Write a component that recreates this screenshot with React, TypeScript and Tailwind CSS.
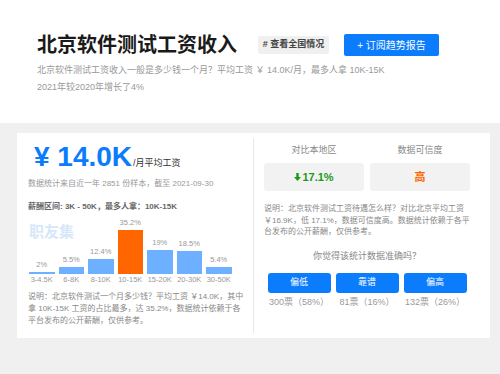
import React from 'react';

const bars = [
  { range: '3-4.5K', pct: 2, label: '2%' },
  { range: '6-8K', pct: 5.5, label: '5.5%' },
  { range: '8-10K', pct: 12.4, label: '12.4%' },
  { range: '10-15K', pct: 35.2, label: '35.2%', top: true },
  { range: '15-20K', pct: 19, label: '19%' },
  { range: '20-30K', pct: 18.5, label: '18.5%' },
  { range: '30-50K', pct: 5.4, label: '5.4%' },
];

const votes = [
  { name: '偏低', count: '300票（58%）' },
  { name: '靠谱', count: '81票（16%）' },
  { name: '偏高', count: '132票（26%）' },
];

function DownArrow() {
  return (
    <svg width="7" height="8" viewBox="0 0 7 8" className="mr-[1px]">
      <path d="M2.3 0h2.4v4h2.3L3.5 8 0 4h2.3z" fill="#1a9a1a" />
    </svg>
  );
}

function App() {
  return (
    <div className="w-[500px] h-[374px] bg-[#f0f0f0] font-['Liberation_Sans','Noto_Sans_CJK_SC',sans-serif]">
      {/* Header */}
      <div className="bg-white h-[123px] pl-[37px] pt-[34px]">
        <div className="flex items-center h-[22px]">
          <h1 className="text-[20px] leading-[22px] font-bold text-[#1a1a1a]">北京软件测试工资收入</h1>
          <span className="ml-[21px] w-[71px] h-[18px] flex items-center justify-center bg-[#f0f0f0] rounded-[2px] text-[9px] font-bold text-[#444]">
            # 查看全国情况
          </span>
          <button className="ml-[15px] w-[95px] h-[22px] bg-[#0b7cfc] rounded-[2px] text-white text-[10px]">
            + 订阅趋势报告
          </button>
        </div>
        <p className="mt-[6px] text-[9px] leading-[17px] text-[#999]">
          北京软件测试工资收入一般是多少钱一个月？平均工资 ￥ 14.0K/月，最多人拿 10K-15K
          <br />
          2021年较2020年增长了4%
        </p>
      </div>

      {/* Card */}
      <div className="pt-[10px] pl-[17px]">
        <div className="w-[473px] h-[205px] bg-white flex">
          {/* Left */}
          <div className="w-[236px] pl-[11px] pt-[10px] relative">
            <div className="flex items-baseline">
              <span className="ml-[6px] text-[28px] leading-[28px] font-bold text-[#0b7cfc]">¥ 14.0K</span>
              <span className="ml-[1px] text-[9px] text-[#333]">/月平均工资</span>
            </div>
            <p className="mt-[7px] text-[8px] leading-[12px] text-[#999]">
              数据统计来自近一年 2851 份样本，截至 2021-09-30
            </p>
            <p className="mt-[11px] text-[8px] leading-[12px] font-bold text-[#666]">
              薪酬区间: 3K - 50K，最多人拿：10K-15K
            </p>

            <div className="relative mt-[5px]">
              <span className="absolute left-[1px] top-[5px] text-[15px] leading-[18px] font-bold text-[#d6e7fa]">职友集</span>
              <div className="flex items-end gap-[4px] h-[56px] pl-[1px]">
                {bars.map((b) => (
                  <div key={b.range} className="w-[25.5px] flex flex-col items-center">
                    <span className="text-[7.5px] leading-[10px] text-[#999] mb-[2px]">{b.label}</span>
                    <div
                      className={b.top ? 'w-full bg-[#ff6600]' : 'w-full bg-[#6cb0ff]'}
                      style={{ height: `${b.pct * 1.25}px` }}
                    />
                  </div>
                ))}
              </div>
              <div className="flex gap-[4px] mt-[1px] pl-[1px]">
                {bars.map((b) => (
                  <span key={b.range} className="w-[25.5px] text-center text-[7.5px] leading-[10px] text-[#999] whitespace-nowrap">
                    {b.range}
                  </span>
                ))}
              </div>
            </div>

            <p className="mt-[6px] text-[8px] leading-[12px] text-[#888] whitespace-nowrap">
              说明：北京软件测试一个月多少钱？平均工资 ￥14.0K，其中
              <br />
              拿 10K-15K 工资的占比最多，达 35.2%，数据统计依赖于各
              <br />
              平台发布的公开薪酬，仅供参考。
            </p>
          </div>

          {/* Right */}
          <div className="flex-1 my-[5px] border-l border-[#e8e8e8] pl-[10px] pr-[20px] pt-[6px]">
            <div className="grid grid-cols-2 gap-x-[6px]">
              <span className="text-center text-[9px] leading-[12px] text-[#888]">对比本地区</span>
              <span className="text-center text-[9px] leading-[12px] text-[#888]">数据可信度</span>
              <div className="mt-[7px] h-[28px] bg-[#f2f2f2] rounded-[3px] flex items-center justify-center text-[11px] font-bold text-[#1a9a1a]">
                <DownArrow />
                17.1%
              </div>
              <div className="mt-[7px] h-[28px] bg-[#f2f2f2] rounded-[3px] flex items-center justify-center text-[11px] font-bold text-[#ff6600]">
                高
              </div>
            </div>
            <p className="mt-[12px] text-[8px] leading-[11.5px] text-[#888] whitespace-nowrap">
              说明：北京软件测试工资待遇怎么样？对比北京平均工资
              <br />
              ￥16.9K，低 17.1%，数据可信度高。数据统计依赖于各平
              <br />
              台发布的公开薪酬，仅供参考。
            </p>
            <p className="mt-[12px] text-center text-[9px] leading-[12px] text-[#888]">你觉得该统计数据准确吗？</p>
            <div className="mt-[11px] flex justify-center gap-[5px]">
              {votes.map((v) => (
                <div key={v.name} className="w-[63px] flex flex-col items-center">
                  <button className="w-full h-[20px] bg-[#0b7cfc] rounded-[3px] text-white text-[9px]">{v.name}</button>
                  <span className="mt-[4px] text-[9px] leading-[10px] text-[#999] whitespace-nowrap">{v.count}</span>
                </div>
              ))}
            </div>
          </div>
        </div>
      </div>
    </div>
  );
}

export default App;
